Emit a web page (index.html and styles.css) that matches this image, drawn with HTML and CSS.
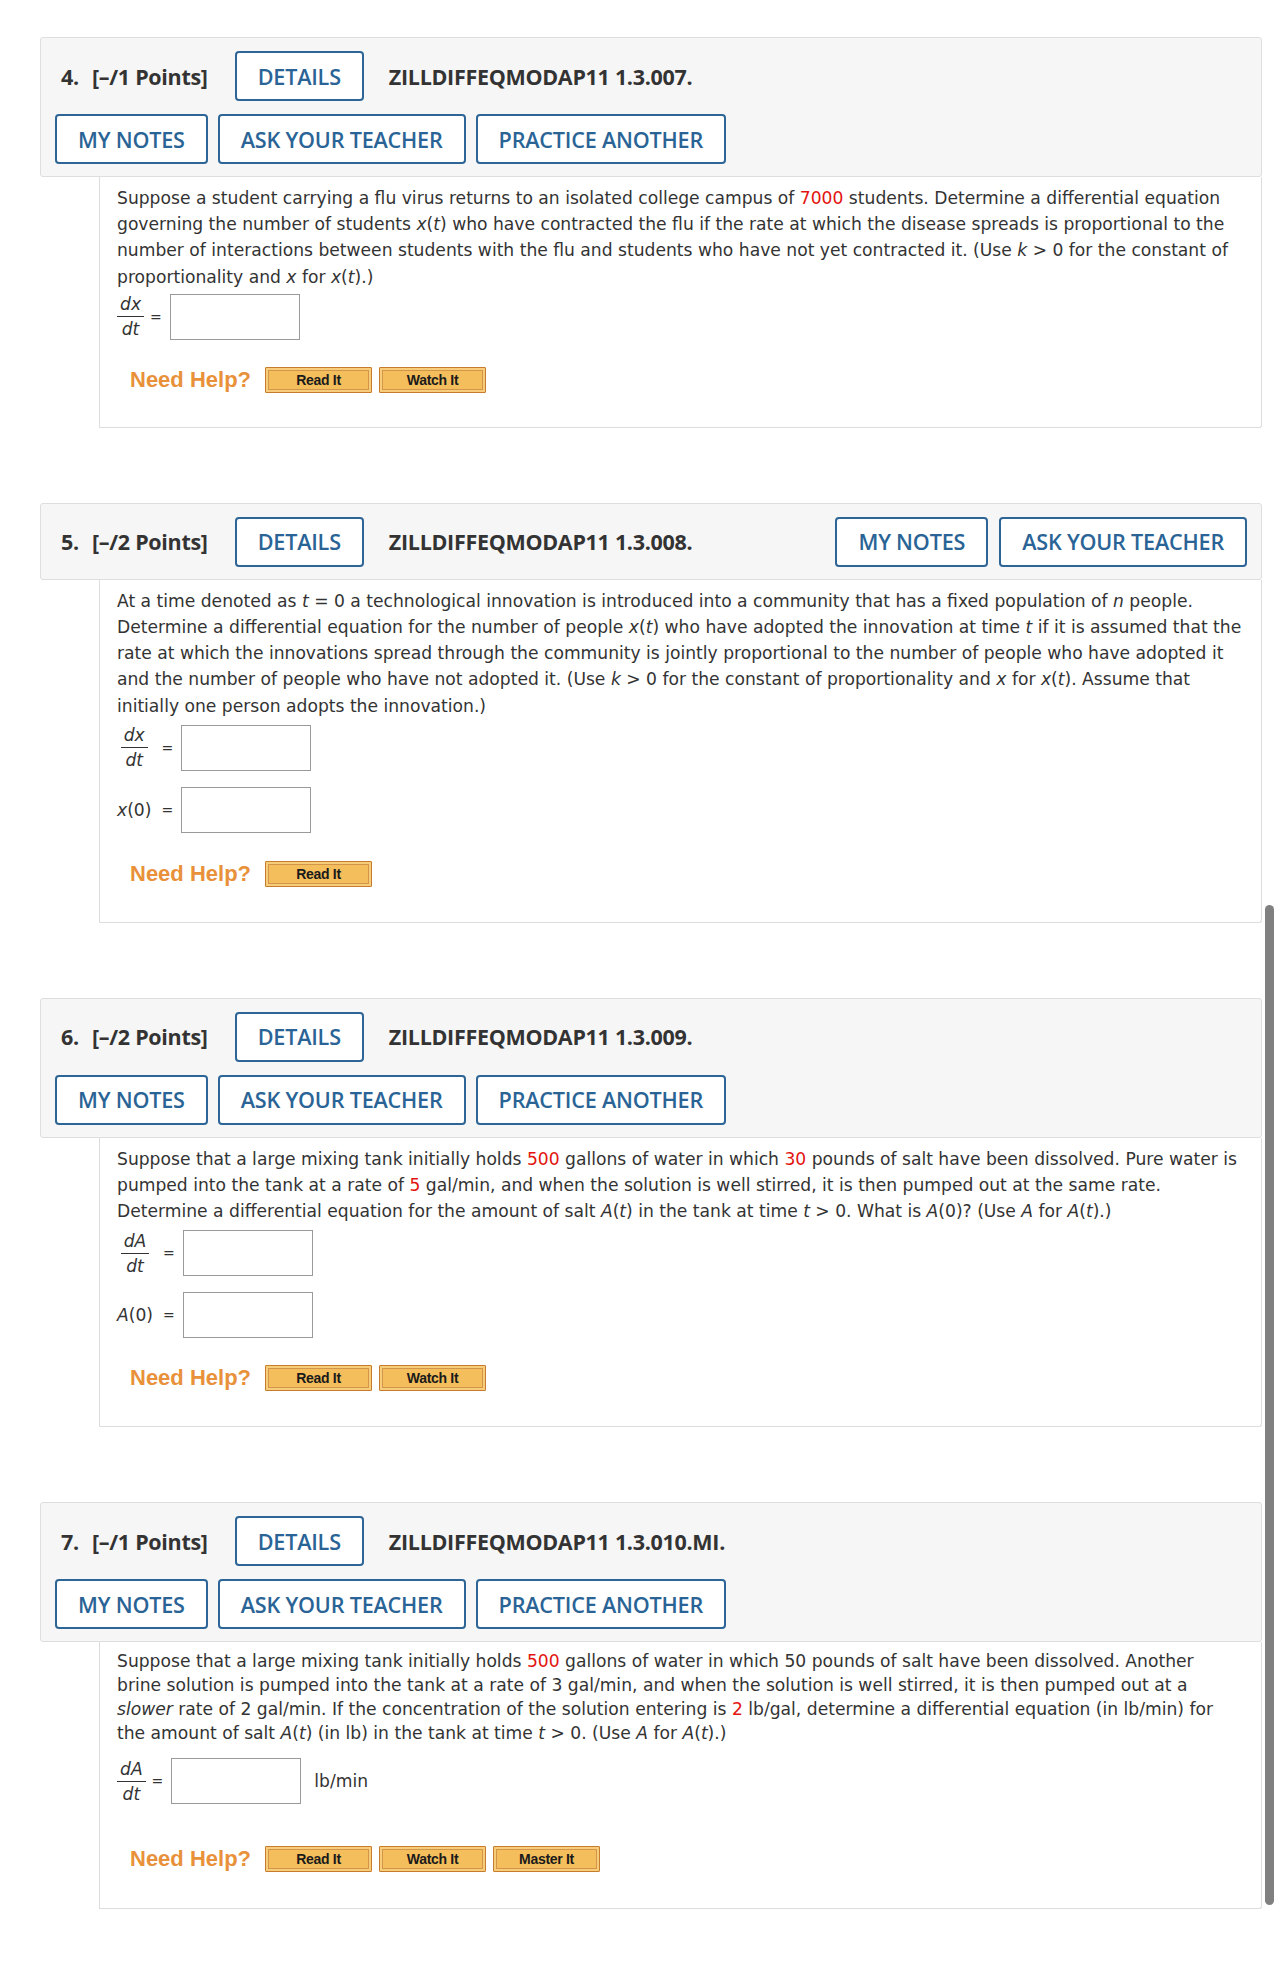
FILE: index.html
```html
<!DOCTYPE html>
<html lang="en">
<head>
<meta charset="utf-8">
<title>Assignment</title>
<link rel="stylesheet" href="styles.css">
</head>
<body>
<div class="page">

  <section class="question">
    <div class="qhead">
      <div class="qrow">
        <span class="qnum">4.</span>
        <span class="qpts">[–/1 Points]</span>
        <button class="btn">DETAILS</button>
        <span class="qcode">ZILLDIFFEQMODAP11 1.3.007.</span>
      </div>
      <div class="qrow qrow-tools">
        <button class="btn">MY NOTES</button>
        <button class="btn">ASK YOUR TEACHER</button>
        <button class="btn">PRACTICE ANOTHER</button>
      </div>
    </div>
    <div class="qbody q4">
      <p class="prompt">Suppose a student carrying a flu virus returns to an isolated college campus of <span class="red">7000</span> students. Determine a differential equation governing the number of students <i>x</i>(<i>t</i>) who have contracted the flu if the rate at which the disease spreads is proportional to the number of interactions between students with the flu and students who have not yet contracted it. (Use <i>k</i> &gt; 0 for the constant of proportionality and <i>x</i> for <i>x</i>(<i>t</i>).)</p>
      <div class="eqs eqs-tight">
        <span class="frac"><span class="num">dx</span><span class="den">dt</span></span>
        <span class="eq">=</span>
        <span class="answer"></span>
      </div>
      <div class="help">
        <span class="need">Need Help?</span>
        <button class="hbtn">Read It</button>
        <button class="hbtn">Watch It</button>
      </div>
    </div>
  </section>

  <section class="question">
    <div class="qhead">
      <div class="qrow">
        <span class="qnum">5.</span>
        <span class="qpts">[–/2 Points]</span>
        <button class="btn">DETAILS</button>
        <span class="qcode">ZILLDIFFEQMODAP11 1.3.008.</span>
        <div class="tools-right">
          <button class="btn">MY NOTES</button>
          <button class="btn">ASK YOUR TEACHER</button>
        </div>
      </div>
    </div>
    <div class="qbody q5">
      <p class="prompt">At a time denoted as <i>t</i> = 0 a technological innovation is introduced into a community that has a fixed population of <i>n</i> people. Determine a differential equation for the number of people <i>x</i>(<i>t</i>) who have adopted the innovation at time <i>t</i> if it is assumed that the rate at which the innovations spread through the community is jointly proportional to the number of people who have adopted it and the number of people who have not adopted it. (Use <i>k</i> &gt; 0 for the constant of proportionality and <i>x</i> for <i>x</i>(<i>t</i>). Assume that initially one person adopts the innovation.)</p>
      <div class="eqs">
        <span class="lbl"><span class="frac"><span class="num">dx</span><span class="den">dt</span></span></span>
        <span class="eq">=</span>
        <span class="answer"></span>
        <span class="lbl lbl-left"><i>x</i>(0)</span>
        <span class="eq">=</span>
        <span class="answer"></span>
      </div>
      <div class="help">
        <span class="need">Need Help?</span>
        <button class="hbtn">Read It</button>
      </div>
    </div>
  </section>

  <section class="question">
    <div class="qhead">
      <div class="qrow">
        <span class="qnum">6.</span>
        <span class="qpts">[–/2 Points]</span>
        <button class="btn">DETAILS</button>
        <span class="qcode">ZILLDIFFEQMODAP11 1.3.009.</span>
      </div>
      <div class="qrow qrow-tools">
        <button class="btn">MY NOTES</button>
        <button class="btn">ASK YOUR TEACHER</button>
        <button class="btn">PRACTICE ANOTHER</button>
      </div>
    </div>
    <div class="qbody q6">
      <p class="prompt">Suppose that a large mixing tank initially holds <span class="red">500</span> gallons of water in which <span class="red">30</span> pounds of salt have been dissolved. Pure water is pumped into the tank at a rate of <span class="red">5</span> gal/min, and when the solution is well stirred, it is then pumped out at the same rate. Determine a differential equation for the amount of salt <i>A</i>(<i>t</i>) in the tank at time <i>t</i> &gt; 0. What is <i>A</i>(0)? (Use <i>A</i> for <i>A</i>(<i>t</i>).)</p>
      <div class="eqs">
        <span class="lbl"><span class="frac"><span class="num">dA</span><span class="den">dt</span></span></span>
        <span class="eq">=</span>
        <span class="answer"></span>
        <span class="lbl lbl-left"><i>A</i>(0)</span>
        <span class="eq">=</span>
        <span class="answer"></span>
      </div>
      <div class="help">
        <span class="need">Need Help?</span>
        <button class="hbtn">Read It</button>
        <button class="hbtn">Watch It</button>
      </div>
    </div>
  </section>

  <section class="question">
    <div class="qhead">
      <div class="qrow">
        <span class="qnum">7.</span>
        <span class="qpts">[–/1 Points]</span>
        <button class="btn">DETAILS</button>
        <span class="qcode">ZILLDIFFEQMODAP11 1.3.010.MI.</span>
      </div>
      <div class="qrow qrow-tools">
        <button class="btn">MY NOTES</button>
        <button class="btn">ASK YOUR TEACHER</button>
        <button class="btn">PRACTICE ANOTHER</button>
      </div>
    </div>
    <div class="qbody q7">
      <p class="prompt prompt-tight">Suppose that a large mixing tank initially holds <span class="red">500</span> gallons of water in which 50 pounds of salt have been dissolved. Another brine solution is pumped into the tank at a rate of 3 gal/min, and when the solution is well stirred, it is then pumped out at a <i>slower</i> rate of 2 gal/min. If the concentration of the solution entering is <span class="red">2</span> lb/gal, determine a differential equation (in lb/min) for the amount of salt <i>A</i>(<i>t</i>) (in lb) in the tank at time <i>t</i> &gt; 0. (Use <i>A</i> for <i>A</i>(<i>t</i>).)</p>
      <div class="eqs eqs-tight">
        <span class="frac"><span class="num">dA</span><span class="den">dt</span></span>
        <span class="eq">=</span>
        <span class="answer"></span>
        <span class="unit">lb/min</span>
      </div>
      <div class="help">
        <span class="need">Need Help?</span>
        <button class="hbtn">Read It</button>
        <button class="hbtn">Watch It</button>
        <button class="hbtn">Master It</button>
      </div>
    </div>
  </section>

  <div class="scrollbar"></div>
</div>
</body>
</html>
```

FILE: styles.css
```css
html, body {
  margin: 0;
  padding: 0;
  background: #ffffff;
}

.page {
  position: relative;
  width: 1222px;
  padding: 37px 0 40px 40px;
  font-family: "DejaVu Sans", Verdana, sans-serif;
  color: #333333;
}

.question {
  margin-bottom: 75px;
}

.question:last-of-type {
  margin-bottom: 0;
}

/* ---------- header ---------- */
.qhead {
  background: #f6f6f6;
  border: 1px solid #dedede;
  border-radius: 3px;
  padding: 13px 14px 12px 14px;
  display: flex;
  flex-direction: column;
  gap: 13px;
}

.qrow {
  display: flex;
  align-items: center;
  height: 50px;
}

.qrow-tools {
  gap: 10px;
}

.qnum,
.qpts,
.qcode {
  font-family: "Open Sans", "Liberation Sans", sans-serif;
  font-weight: 700;
  font-size: 21.5px;
  color: #333333;
  letter-spacing: -0.3px;
}

.qnum {
  margin-left: 6px;
  width: 31px;
}

.qpts {
  margin-right: 27px;
}

.qcode {
  margin-left: 25px;
}

.tools-right {
  margin-left: auto;
  display: flex;
  gap: 11px;
}

.btn {
  height: 50px;
  box-sizing: border-box;
  padding: 0 21px;
  background: #ffffff;
  border: 2px solid #2d6596;
  border-radius: 4px;
  color: #2a6496;
  font-family: "Open Sans", "Liberation Sans", sans-serif;
  font-weight: 600;
  font-size: 21.6px;
  letter-spacing: -0.2px;
  cursor: pointer;
}

/* ---------- body ---------- */
.qbody {
  margin-left: 59px;
  border: 1px solid #dddddd;
  border-top: none;
  border-radius: 0 0 3px 0;
  padding: 8px 18px 0 17px;
  font-size: 17.15px;
}

.prompt {
  margin: 0;
  line-height: 26.2px;
}

.prompt-tight {
  line-height: 23.7px;
  max-width: 1112px;
}

.red {
  color: #e3140f;
}

/* equations */
.eqs {
  display: grid;
  grid-template-columns: auto auto auto;
  justify-content: start;
  align-items: center;
  row-gap: 16px;
  margin-top: 6px;
}

.eqs-tight {
  grid-template-columns: auto auto auto auto;
  margin-top: 4px;
}

.q7 .eqs-tight {
  margin-top: 13px;
}

.lbl {
  justify-self: center;
}

.lbl-left {
  justify-self: start;
}

.frac {
  display: inline-flex;
  flex-direction: column;
  align-items: center;
  font-style: italic;
  line-height: 20px;
}

.frac .num {
  padding: 0 3px 2px;
  border-bottom: 1.5px solid #333333;
}

.frac .den {
  padding: 2px 3px 0;
}

.eq {
  padding: 0 8px 0 6px;
  font-size: 14px;
}

.eqs .lbl + .eq {
  padding-left: 10px;
}

.answer {
  display: block;
  width: 130px;
  height: 46px;
  box-sizing: border-box;
  border: 1px solid #9a9a9a;
  background: #ffffff;
}

.unit {
  margin-left: 13px;
}

/* help row */
.help {
  display: flex;
  align-items: center;
  padding-left: 13px;
  margin-top: 27px;
  padding-bottom: 34px;
}

.q5 .help {
  margin-top: 28px;
  padding-bottom: 35px;
}

.q6 .help {
  margin-top: 27px;
  padding-bottom: 35px;
}

.q7 .help {
  margin-top: 42px;
  padding-bottom: 36px;
}

.need {
  font-family: "Liberation Sans", Arial, sans-serif;
  font-weight: 700;
  font-size: 22px;
  color: #e8913a;
  margin-right: 14px;
}

.hbtn {
  width: 107px;
  height: 26px;
  margin-right: 7px;
  padding: 0;
  box-sizing: border-box;
  background: #f4be5c;
  border: 1px solid #c67b2d;
  box-shadow: inset 0 0 0 2px #f7cd7c, inset 0 0 0 3px #d2954a;
  border-radius: 1px;
  font-family: "Liberation Sans", Arial, sans-serif;
  font-weight: 700;
  font-size: 14px;
  color: #1a1a1a;
  letter-spacing: -0.3px;
}

/* overlay scrollbar */
.scrollbar {
  position: absolute;
  left: 1265px;
  top: 905px;
  width: 9px;
  height: 1000px;
  background: #808080;
  border-radius: 5px;
}
```
